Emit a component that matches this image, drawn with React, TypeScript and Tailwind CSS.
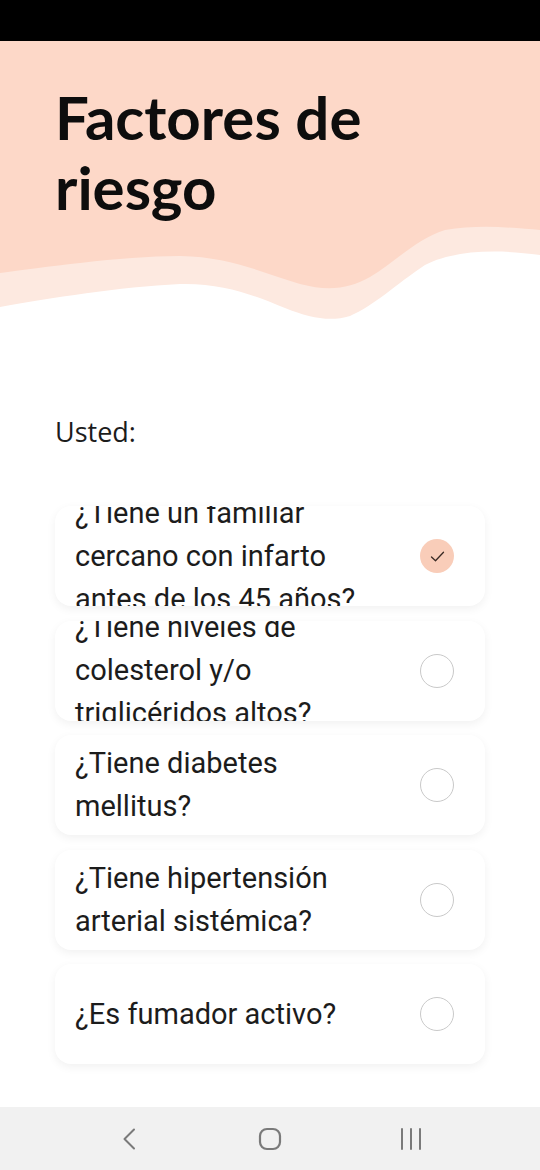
const questions = [
  { text: "¿Tiene un familiar cercano con infarto antes de los 45 años?", checked: true },
  { text: "¿Tiene niveles de colesterol y/o triglicéridos altos?", checked: false },
  { text: "¿Tiene diabetes mellitus?", checked: false },
  { text: "¿Tiene hipertensión arterial sistémica?", checked: false },
  { text: "¿Es fumador activo?", checked: false },
];

function RadioMark({ checked }: { checked: boolean }) {
  if (checked) {
    return (
      <div className="flex h-[34px] w-[34px] flex-none items-center justify-center rounded-full bg-[#f9cdb9]">
        <svg width="15" height="15" viewBox="0 0 15 15" fill="none">
          <path d="M1.5 8 L5.5 11.8 L13.5 3.2" stroke="#3a2a24" strokeWidth="1.3" strokeLinecap="round" strokeLinejoin="round" />
        </svg>
      </div>
    );
  }
  return <div className="h-[34px] w-[34px] flex-none rounded-full border border-[#c9c9c9] bg-white" />;
}

function QuestionCard({ text, checked }: { text: string; checked: boolean }) {
  return (
    <div className="flex h-[100px] items-center justify-between overflow-hidden rounded-2xl bg-white pl-5 pr-[31px] shadow-[0_3px_10px_rgba(0,0,0,0.06)]">
      <p className="w-[305px] text-[29px] leading-[43px] text-[#1c1c1c]">{text}</p>
      <RadioMark checked={checked} />
    </div>
  );
}

// decorative header wave, drawn in page coordinates (y 222-330)
function Wave() {
  return (
    <svg className="block" width="540" height="108" viewBox="0 222 540 108" preserveAspectRatio="none">
      <rect x="0" y="222" width="540" height="108" fill="#fdd8c8" />
      <path
        d="M0 273 C40 268 120 256 180 256 C230 257 260 272 300 284 C330 292 350 288 370 277 C395 262 415 240 445 230 C480 224 515 228 540 230 L540 330 L0 330 Z"
        fill="#fde9e0"
      />
      <path
        d="M0 307 C50 298 120 287 180 284 C225 283 255 296 285 308 C310 318 330 322 350 316 C375 305 395 285 425 265 C450 252 490 248 540 255 L540 330 L0 330 Z"
        fill="#ffffff"
      />
    </svg>
  );
}

export default function App() {
  return (
    <div className="flex h-[1170px] w-[540px] flex-col overflow-hidden bg-white font-['Roboto',sans-serif]">
      <div className="h-[41px] flex-none bg-black" />

      <header className="flex-none bg-[#fdd8c8] px-[55px] pt-[41px]">
        <h1 className="font-['Lato',sans-serif] text-[60px] font-bold leading-[70px] text-[#0d0d0d]">
          Factores de
          <br />
          riesgo
        </h1>
      </header>
      <Wave />

      <main className="flex flex-1 flex-col px-[55px]">
        <p className="mt-[84px] font-['Open_Sans',sans-serif] text-[27px] leading-[36px] text-[#1c1c1c]">Usted:</p>
        <div className="mt-[56px] flex flex-col gap-[14.5px]">
          {questions.map((q) => (
            <QuestionCard key={q.text} text={q.text} checked={q.checked} />
          ))}
        </div>
      </main>

      <nav className="flex h-[63px] flex-none items-center gap-[117px] bg-[#f1f1f1] pl-[117px]">
        <svg width="24" height="26" viewBox="0 0 24 26" fill="none">
          <path d="M17 3.5 L7.5 13 L17 22.5" stroke="#7a7a7a" strokeWidth="2" strokeLinecap="round" strokeLinejoin="round" />
        </svg>
        <svg width="24" height="26" viewBox="0 0 24 26" fill="none">
          <rect x="2" y="3" width="20" height="20" rx="7" stroke="#7a7a7a" strokeWidth="2.2" />
        </svg>
        <svg width="24" height="26" viewBox="0 0 24 26" fill="none">
          <path d="M3 3 V23 M12 3 V23 M21 3 V23" stroke="#7a7a7a" strokeWidth="2" strokeLinecap="round" />
        </svg>
      </nav>
    </div>
  );
}
